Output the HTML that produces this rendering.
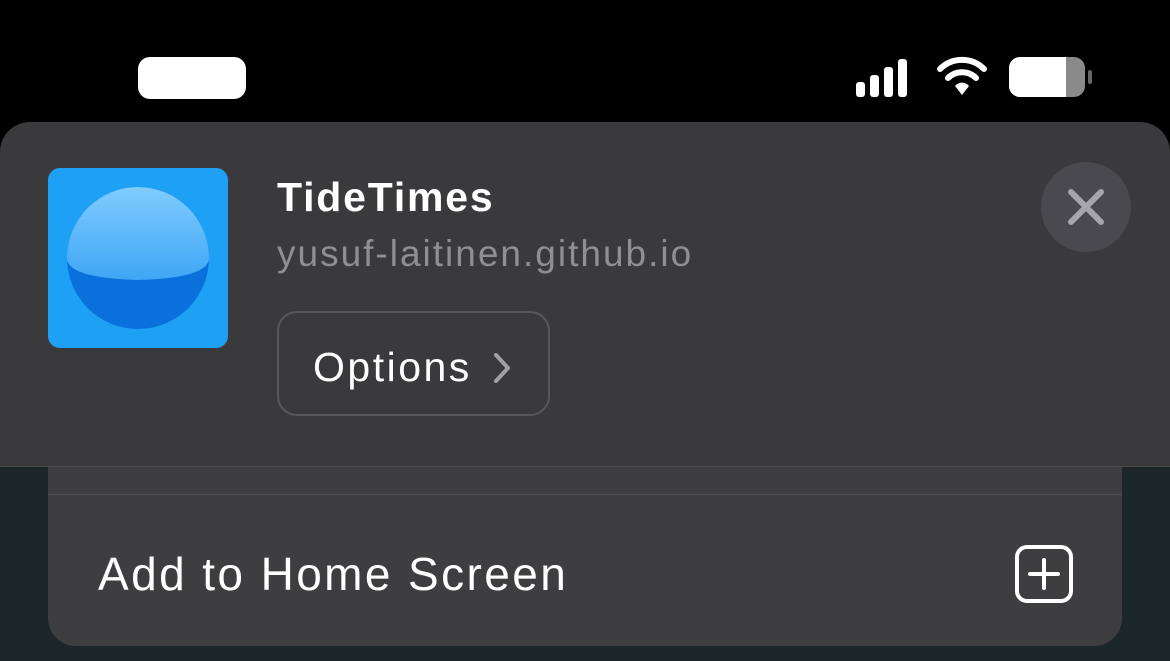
<!DOCTYPE html>
<html><head><style>
body{margin:0;width:1170px;height:661px;background:#000;position:relative;overflow:hidden;font-family:"Liberation Sans",sans-serif}
.bg{position:absolute;left:0;top:440px;width:1170px;height:221px;background:#1c262b}
.sheet{position:absolute;left:0;top:122px;width:1170px;height:344px;background:#3a3a3c;border-radius:30px 30px 0 0;border-bottom:1px solid #4a4a4c}
.card{position:absolute;left:48px;top:467px;width:1074px;height:179px;background:#3e3e40;border-radius:0 0 28px 28px}
.sep{position:absolute;left:0;top:27px;width:1074px;height:1px;background:#505052}
</style></head><body>
<div class="bg"></div>
<div style="position:absolute;left:138px;top:57px;width:108px;height:42px;border-radius:12px;background:#fff"></div>
<svg style="position:absolute;left:850px;top:55px" width="250" height="46">
<rect x="6" y="27" width="9" height="15" rx="3" fill="#fff"/>
<rect x="20" y="20" width="9" height="22" rx="3" fill="#fff"/>
<rect x="34" y="12" width="9" height="30" rx="3" fill="#fff"/>
<rect x="48" y="4" width="9" height="38" rx="3" fill="#fff"/>
<path d="M90 14 a31 31 0 0 1 44 0" stroke="#fff" stroke-width="6" fill="none" stroke-linecap="round"/>
<path d="M98 23 a20 20 0 0 1 28 0" stroke="#fff" stroke-width="6" fill="none" stroke-linecap="round"/>
<path d="M105 31 a9 9 0 0 1 14 0 L112 40 Z" fill="#fff"/>
<rect x="159" y="2" width="76" height="40" rx="11" fill="#8a8a8a"/>
<path d="M170 2 h46 v40 h-46 a11 11 0 0 1 -11 -11 v-18 a11 11 0 0 1 11 -11z" fill="#fff"/>
<rect x="238" y="15" width="4" height="14" rx="2" fill="#666"/>
</svg>
<div class="sheet">
<svg style="position:absolute;left:48px;top:46px" width="180" height="180">
<defs><linearGradient id="g" x1="0" y1="0" x2="0" y2="1"><stop offset="0" stop-color="#80ccff"/><stop offset="1" stop-color="#3fa6f5"/></linearGradient></defs>
<rect width="180" height="180" rx="12" fill="#1ea0f5"/>
<circle cx="90" cy="90" r="71" fill="#0a70dc"/>
<path d="M19 90 a71 71 0 0 1 142 0 q0 20 -71 22 q-71 -2 -71 -22z" fill="url(#g)"/>
</svg>
<div style="position:absolute;left:277px;top:52px;color:#fff;font-size:41px;font-weight:bold;letter-spacing:1.8px">TideTimes</div>
<div style="position:absolute;left:277px;top:111px;color:#8e8e93;font-size:37px;letter-spacing:2px">yusuf-laitinen.github.io</div>
<div style="position:absolute;left:277px;top:189px;width:273px;height:105px;border:2px solid #58585c;border-radius:20px;box-sizing:border-box"></div>
<div style="position:absolute;left:313px;top:222px;color:#fff;font-size:41px;letter-spacing:2.5px">Options</div>
<svg style="position:absolute;left:490px;top:227px" width="26" height="40"><path d="M6 6 L18 19 L6 32" stroke="#a0a0a5" stroke-width="4" fill="none" stroke-linecap="round" stroke-linejoin="round"/></svg>
<svg style="position:absolute;left:1041px;top:40px" width="90" height="90"><circle cx="45" cy="45" r="45" fill="#4a4a4e"/><path d="M30 30 L60 60 M60 30 L30 60" stroke="#a5a5aa" stroke-width="6" stroke-linecap="round"/></svg>
</div>
<div class="card"><div class="sep"></div>
<div style="position:absolute;left:50px;top:80px;color:#fff;font-size:46px;letter-spacing:2.4px">Add to Home Screen</div>
<svg style="position:absolute;left:966px;top:77px" width="60" height="60"><rect x="3" y="3" width="54" height="54" rx="10" stroke="#fff" stroke-width="4" fill="none"/><path d="M30 16 V44 M16 30 H44" stroke="#fff" stroke-width="4" stroke-linecap="round"/></svg>
</div>
</body></html>
